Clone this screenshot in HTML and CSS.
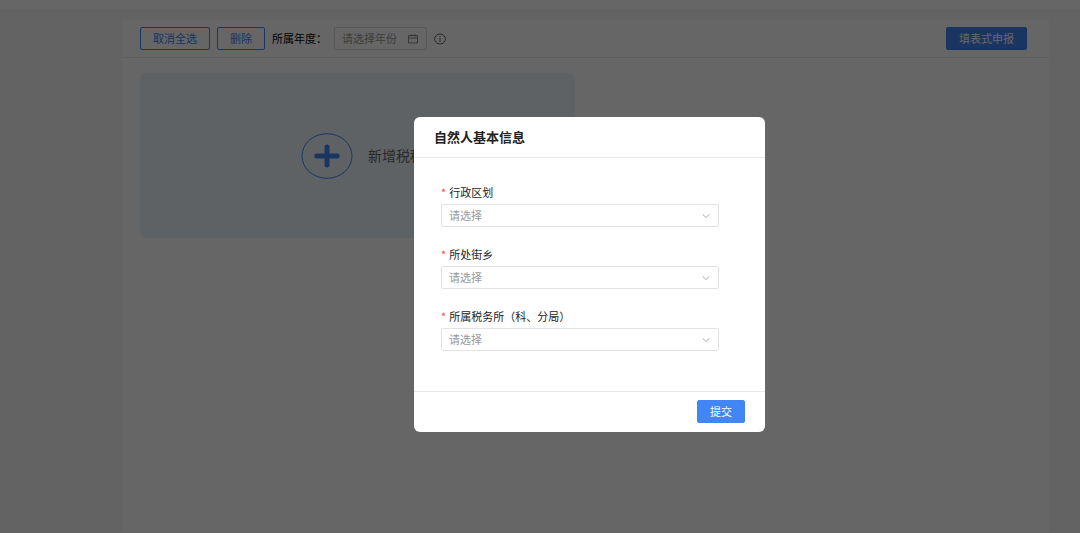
FILE: index.html
```html
<!DOCTYPE html>
<html lang="zh-CN">
<head>
<meta charset="utf-8">
<title>自然人基本信息</title>
<link rel="stylesheet" href="styles.css">
</head>
<body>
<div class="page">
  <header class="topbar"></header>
  <main class="panel">
    <div class="toolbar">
      <button class="btn btn-outline" type="button">取消全选</button>
      <button class="btn btn-outline" type="button">删除</button>
      <label class="year-label" for="year">所属年度：</label>
      <div class="year-field">
        <input class="year-input" id="year" type="text" placeholder="请选择年份">
        <svg class="icon" viewBox="0 0 12 12" width="12" height="12" aria-hidden="true"><path d="M1.5 2.5h9v7.5h-9zM1.5 5h9M4 1v2.5M8 1v2.5"/></svg>
      </div>
      <svg class="icon info" viewBox="0 0 12 12" width="12" height="12" aria-hidden="true"><ellipse cx="6" cy="6" rx="5.4" ry="5"/><path d="M6 5v4M6 3v1.2"/></svg>
      <button class="btn btn-primary push" type="button">填表式申报</button>
    </div>
    <div class="content">
      <button class="add-tile" type="button">
        <svg class="plus" viewBox="0 0 52 46" width="52" height="46" aria-hidden="true"><ellipse cx="26" cy="23" rx="25" ry="22.3"/><path d="M15.8 23h20.4M26 14v18"/></svg>
        <span>新增税种</span>
      </button>
    </div>
  </main>
</div>
<div class="overlay">
  <form class="dialog" role="dialog" aria-modal="true" aria-labelledby="dialog-title">
    <h2 class="dialog-title" id="dialog-title">自然人基本信息</h2>
    <div class="dialog-body">
      <div class="field">
        <label class="field-label" for="region">行政区划</label>
        <div class="select-wrap">
          <select class="select" id="region"><option>请选择</option></select>
          <svg class="chevron" viewBox="0 0 10 10" width="10" height="10" aria-hidden="true"><path d="M1.5 3.2L5 6.6l3.5-3.4"/></svg>
        </div>
      </div>
      <div class="field">
        <label class="field-label" for="street">所处街乡</label>
        <div class="select-wrap">
          <select class="select" id="street"><option>请选择</option></select>
          <svg class="chevron" viewBox="0 0 10 10" width="10" height="10" aria-hidden="true"><path d="M1.5 3.2L5 6.6l3.5-3.4"/></svg>
        </div>
      </div>
      <div class="field">
        <label class="field-label" for="office">所属税务所（科、分局）</label>
        <div class="select-wrap">
          <select class="select" id="office"><option>请选择</option></select>
          <svg class="chevron" viewBox="0 0 10 10" width="10" height="10" aria-hidden="true"><path d="M1.5 3.2L5 6.6l3.5-3.4"/></svg>
        </div>
      </div>
    </div>
    <footer class="dialog-footer">
      <button class="btn btn-primary" type="button">提交</button>
    </footer>
  </form>
</div>
</body>
</html>
```

FILE: styles.css
```css
* {
  box-sizing: border-box;
}

body {
  margin: 0;
  color: #222;
  font: 11px/16px "Noto Sans CJK SC", sans-serif;
}

button,
input,
select {
  margin: 0;
  font: inherit;
}

.page {
  display: flex;
  flex-direction: column;
  min-height: 100vh;
  background: #f7f7f7;
}

.topbar {
  height: 9px;
  background: #fff;
}

.panel {
  flex: 1;
  margin: 11px 31px 0 122px;
  background: #fff;
}

.toolbar {
  display: flex;
  align-items: center;
  gap: 7px;
  padding: 7px 22px 7px 18px;
  border-bottom: 1px solid #ececec;
}

.btn {
  height: 23px;
  padding: 0 12px 2px;
  border: 1px solid #4285f4;
  border-radius: 2px;
  line-height: 18px;
  white-space: nowrap;
}

.btn-outline {
  background: #fff;
  color: #4285f4;
}

.btn-primary {
  background: #4285f4;
  color: #fff;
}

.push {
  margin-left: auto;
}

.year-label {
  padding-bottom: 2px;
  color: #000;
}

.year-field {
  display: flex;
  align-items: center;
  width: 93px;
  height: 23px;
  padding: 0 7px;
  border: 1px solid #d9d9d9;
  border-radius: 2px;
}

.year-input {
  flex: 1;
  min-width: 0;
  padding: 0 0 2px;
  border: 0;
  outline: 0;
  background: transparent;
}

.year-input::placeholder {
  color: #999;
  opacity: 1;
}

.icon {
  flex: none;
  fill: none;
  stroke: #888;
}

.info {
  stroke: #666;
}

.content {
  padding: 15px 18px;
}

.add-tile {
  display: flex;
  align-items: center;
  gap: 15px;
  width: 435px;
  max-width: 100%;
  height: 165px;
  padding: 0 0 0 161px;
  border: 0;
  border-radius: 6px;
  background: #ebf5fc;
  color: #666;
  font-size: 14px;
}

.add-tile span {
  padding-bottom: 2px;
}

.plus {
  flex: none;
  fill: none;
  stroke: #4285f4;
}

.plus path {
  stroke-width: 5;
  stroke-linecap: round;
}

.overlay {
  position: fixed;
  inset: 0;
  display: flex;
  align-items: flex-start;
  justify-content: center;
  padding: 117px 0 0 99px;
  background: rgba(0, 0, 0, 0.6);
}

.dialog {
  width: 351px;
  border-radius: 6px;
  background: #fff;
}

.dialog-title {
  margin: 0;
  padding: 10px 20px;
  border-bottom: 1px solid #e8e8e8;
  font-size: 13px;
  line-height: 20px;
}

.dialog-body {
  display: grid;
  gap: 19px;
  padding: 26px 46px 40px 27px;
}

.field {
  display: grid;
  gap: 4px;
}

.field-label::before {
  content: "*";
  margin-right: 3px;
  color: #f04a50;
}

.select-wrap {
  display: grid;
  align-items: center;
}

.select,
.chevron {
  grid-area: 1 / 1;
}

.select {
  width: 100%;
  height: 23px;
  padding: 0 24px 2px 7px;
  border: 1px solid #e2e2e2;
  border-radius: 2px;
  appearance: none;
  background: #fff;
  color: #999;
}

.chevron {
  justify-self: end;
  margin-right: 8px;
  fill: none;
  stroke: #aaa;
  pointer-events: none;
}

.dialog-footer {
  display: flex;
  justify-content: flex-end;
  padding: 8px 20px 9px;
  border-top: 1px solid #e8e8e8;
}
```
